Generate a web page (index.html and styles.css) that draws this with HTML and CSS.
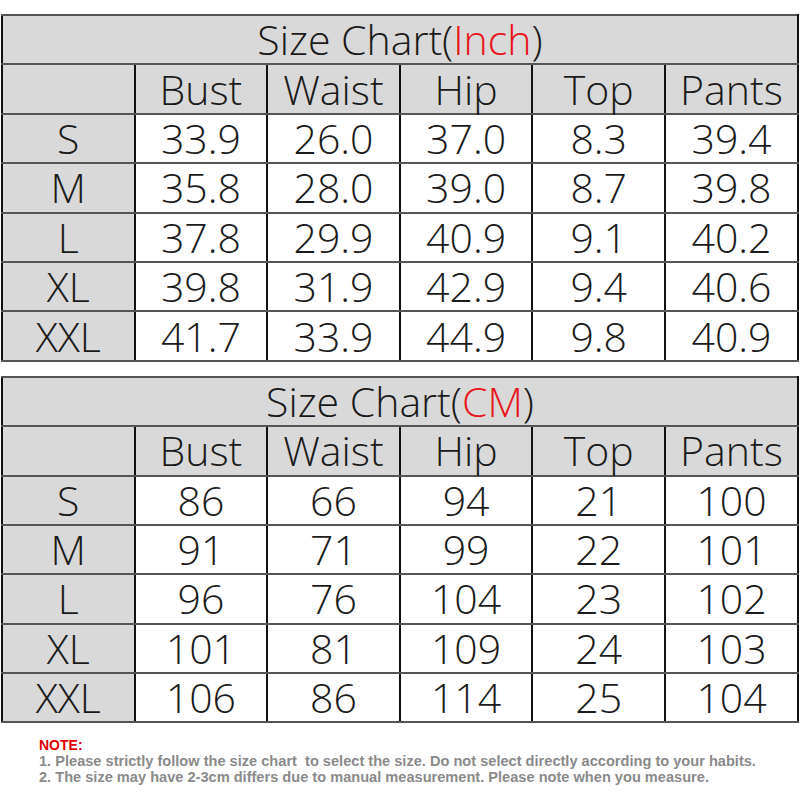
FILE: index.html
```html
<!DOCTYPE html>
<html>
<head>
<meta charset="utf-8">
<link rel="stylesheet" href="styles.css">
</head>
<body>
<div class="page">
  <table class="chart">
    <tr><td class="title" colspan="6">Size Chart(<span class="red">Inch</span>)</td></tr>
    <tr class="head"><td></td><td>Bust</td><td>Waist</td><td>Hip</td><td>Top</td><td>Pants</td></tr>
    <tr><td class="size">S</td><td>33.9</td><td>26.0</td><td>37.0</td><td>8.3</td><td>39.4</td></tr>
    <tr><td class="size">M</td><td>35.8</td><td>28.0</td><td>39.0</td><td>8.7</td><td>39.8</td></tr>
    <tr><td class="size">L</td><td>37.8</td><td>29.9</td><td>40.9</td><td>9.1</td><td>40.2</td></tr>
    <tr><td class="size">XL</td><td>39.8</td><td>31.9</td><td>42.9</td><td>9.4</td><td>40.6</td></tr>
    <tr><td class="size">XXL</td><td>41.7</td><td>33.9</td><td>44.9</td><td>9.8</td><td>40.9</td></tr>
  </table>
  <table class="chart">
    <tr><td class="title" colspan="6">Size Chart(<span class="red">CM</span>)</td></tr>
    <tr class="head"><td></td><td>Bust</td><td>Waist</td><td>Hip</td><td>Top</td><td>Pants</td></tr>
    <tr><td class="size">S</td><td>86</td><td>66</td><td>94</td><td>21</td><td>100</td></tr>
    <tr><td class="size">M</td><td>91</td><td>71</td><td>99</td><td>22</td><td>101</td></tr>
    <tr><td class="size">L</td><td>96</td><td>76</td><td>104</td><td>23</td><td>102</td></tr>
    <tr><td class="size">XL</td><td>101</td><td>81</td><td>109</td><td>24</td><td>103</td></tr>
    <tr><td class="size">XXL</td><td>106</td><td>86</td><td>114</td><td>25</td><td>104</td></tr>
  </table>
  <div class="note">
    <div class="note-title">NOTE:</div>
    <div class="note-line">1. Please strictly follow the size chart&nbsp; to select the size. Do not select directly according to your habits.</div>
    <div class="note-line">2. The size may have 2-3cm differs due to manual measurement. Please note when you measure.</div>
  </div>
</div>
</body>
</html>
```

FILE: styles.css
```css
html, body {
  margin: 0;
  padding: 0;
  background: #ffffff;
}

.page {
  width: 800px;
  padding-top: 14px;
}

.chart {
  border-collapse: collapse;
  table-layout: fixed;
  width: 798px;
  margin-left: 1px;
  margin-bottom: 14px;
  border: 2px solid #111;
  font-family: "Open Sans", "DejaVu Sans", sans-serif;
  font-weight: 300;
  font-size: 41px;
  color: #1a1a1a;
}

.chart td {
  height: 47.4px;
  padding: 0;
  text-align: center;
  vertical-align: middle;
  line-height: 47px;
  border-top: 2px solid #555;
  border-bottom: 2px solid #555;
  border-left: 2px solid #111;
  border-right: 2px solid #111;
  background: #ffffff;
  white-space: nowrap;
}

.chart td:first-child {
  width: 131px;
}

.chart .title,
.chart .head td,
.chart .size {
  background: #d9d9d9;
}

.red {
  color: #e8141b;
}

.note {
  padding-left: 39px;
  padding-top: 0;
  font-family: "Liberation Sans", Arial, sans-serif;
  font-weight: bold;
  font-size: 14.6px;
  line-height: 16px;
  color: #8a8a8a;
}

.note-title {
  color: #e00000;
  font-size: 14px;
}
```
